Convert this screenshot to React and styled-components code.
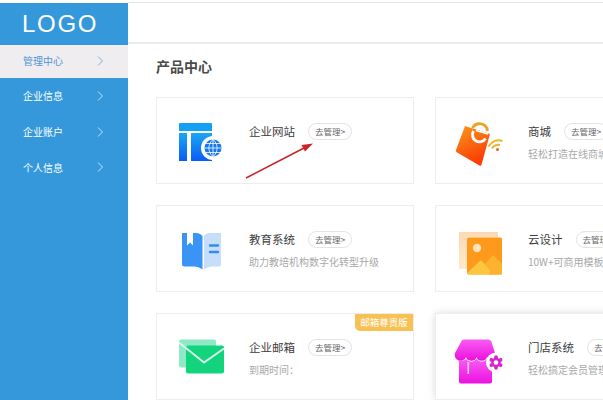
import React from "react";
import styled, { createGlobalStyle } from "styled-components";

const GlobalStyle = createGlobalStyle`
  html, body {
    margin: 0;
    padding: 0;
    background: #fff;
    font-family: "Noto Sans CJK SC", "Liberation Sans", sans-serif;
  }
  * {
    box-sizing: border-box;
  }
`;

const Page = styled.div`
  position: relative;
  display: flex;
  width: 603px;
  height: 400px;
  overflow: hidden;
  background: #fff;
`;

const Sidebar = styled.aside`
  flex: 0 0 128px;
  margin-top: 3px;
  background: #3498db;
`;

const Logo = styled.div`
  height: 41px;
  padding-left: 22px;
  font-family: "Liberation Sans", sans-serif;
  font-size: 24px;
  line-height: 41px;
  letter-spacing: 1.7px;
  color: #fff;
`;

const MenuList = styled.nav`
  display: flex;
  flex-direction: column;
  padding-top: 1px;
`;

const MenuItem = styled.div`
  display: flex;
  align-items: center;
  justify-content: space-between;
  height: ${(p) => (p.$active ? "33px" : "35.7px")};
  padding: 0 24px 2px 23px;
  margin-bottom: ${(p) => (p.$active ? "1px" : "0")};
  background: ${(p) => (p.$active ? "#efedf0" : "transparent")};
  color: ${(p) => (p.$active ? "#4f94d4" : "#fff")};
  font-size: 10px;
`;

const Main = styled.main`
  flex: 1;
  min-width: 0;
`;

const TopBar = styled.header`
  height: 42px;
  margin-top: 2px;
  border-top: 1px solid #e6e6e6;
  border-bottom: 2px solid #ececec;
`;

const Content = styled.div`
  padding: 12px 0 0 28px;
`;

const Heading = styled.h2`
  margin: 0 0 21px;
  font-size: 14px;
  line-height: 20px;
  font-weight: 700;
  color: #4a4a4a;
`;

const CardGrid = styled.div`
  display: grid;
  grid-template-columns: 258px 258px;
  grid-auto-rows: 87px;
  column-gap: 21px;
  row-gap: 21px;
`;

const Card = styled.article`
  position: relative;
  display: flex;
  align-items: center;
  height: 87px;
  padding-left: 16px;
  border: 1px solid #ededed;
  background: #fff;
  box-shadow: ${(p) => (p.$raised ? "0 0 8px rgba(0, 0, 0, 0.13)" : "none")};
`;

const IconBox = styled.div`
  flex: 0 0 60px;
  width: 60px;
  height: 60px;
  margin-right: 16px;
`;

const CardBody = styled.div`
  display: flex;
  flex-direction: column;
  gap: 7px;
  min-width: 0;
  padding-top: 2px;
`;

const TitleRow = styled.div`
  display: flex;
  align-items: center;
  white-space: nowrap;
`;

const Title = styled.h3`
  margin: 0 13px 0 0;
  font-size: 11.5px;
  line-height: 17px;
  font-weight: 400;
  color: #3c3c3c;
`;

const ManageButton = styled.span`
  flex: none;
  width: 44px;
  height: 17px;
  border: 1px solid #e3e3e3;
  border-radius: 9px;
  font-size: 8.5px;
  line-height: 15px;
  text-align: center;
  color: #666;
`;

const Subtitle = styled.p`
  margin: 0;
  height: 14px;
  font-size: 10px;
  line-height: 14px;
  color: #a8a8a8;
  white-space: nowrap;
`;

const Ribbon = styled.span`
  position: absolute;
  top: 0;
  right: 0;
  width: 58px;
  height: 17px;
  border-radius: 0 0 0 5px;
  background: #f8c153;
  color: #fff;
  font-size: 9.5px;
  line-height: 17px;
  text-align: center;
`;

const Annotation = styled.svg`
  position: absolute;
  left: 244px;
  top: 142px;
`;

const Chevron = ({ color }) => (
  <svg width="7" height="10" viewBox="0 0 7 10" fill="none">
    <path d="M1 .5 5.5 5 1 9.5" stroke={color} strokeWidth="0.9" />
  </svg>
);

const WebsiteIcon = () => (
  <svg width="60" height="60" viewBox="0 0 60 60">
    <defs>
      <linearGradient id="web" x1="0" y1="0" x2="0" y2="1">
        <stop offset="0" stopColor="#1ba7f2" />
        <stop offset="1" stopColor="#0a5cf5" />
      </linearGradient>
    </defs>
    <path d="M6 13a1 1 0 0 1 1-1h31a1 1 0 0 1 1 1v7H6z" fill="#14a0f4" />
    <path d="M6 22h8v28H6zM18 22h21v28H18z" fill="url(#web)" />
    <circle cx="40" cy="37" r="12" fill="#fff" />
    <circle cx="40" cy="37" r="8.500" fill="#1778ea" />
    <path
      d="M31.500 37h17M33 32.500h14M33 41.500h14M40 28.500v17M40 28.500c-5.500 4.500-5.500 12.500 0 17M40 28.500c5.500 4.500 5.500 12.500 0 17"
      stroke="#fff"
      strokeWidth="0.8"
      fill="none"
    />
  </svg>
);

const ShopIcon = () => (
  <svg width="60" height="60" viewBox="0 0 60 60">
    <defs>
      <linearGradient id="shop" x1="0" y1="0" x2="0.4" y2="1">
        <stop offset="0" stopColor="#f99a1d" />
        <stop offset="1" stopColor="#fb3c04" />
      </linearGradient>
    </defs>
    <path
      d="M13 15 38 23 29.500 53.500a1.500 1.500 0 0 1-2 1L5 41.500a2.500 2.500 0 0 1-1-2.500z"
      fill="url(#shop)"
    />
    <path d="M21.500 20a7 7 0 0 0 12 7.500" fill="none" stroke="#fff" strokeWidth="2.800" />
    <path d="M20.500 17a8 8 0 0 1 15 3" fill="none" stroke="#eda32a" strokeWidth="2.800" />
    <path d="M24 19.500 36 23" stroke="#fff" strokeWidth="1.500" />
    <path d="M36.500 35.500c3-5.500 9-7.500 14-5.500" fill="none" stroke="#eeb52f" strokeWidth="2" />
    <path d="M40 37.500c2-3 5-4 8-3.500" fill="none" stroke="#eeb52f" strokeWidth="2" />
    <circle cx="45.500" cy="38.500" r="1.500" fill="#e8622a" />
  </svg>
);

const BookIcon = () => (
  <svg width="60" height="60" viewBox="0 0 60 60">
    <path
      d="M9 14h5v12.500l3-3 3 3V14h3c3 0 5.500 1.500 6.500 3v33.500c-3-2.500-7-3-11-3h-7A2.500 2.500 0 0 1 9 45z"
      fill="#3a94f5"
    />
    <path d="M31 17c1-1.700 3.500-3 6-3h11v31.500a2 2 0 0 1-2 2h-4c-4 0-8 .5-11 3z" fill="#c6def9" />
    <path d="M37 26.500h8M37 33h8" stroke="#2f8df2" strokeWidth="2.400" strokeLinecap="round" />
  </svg>
);

const ImageIcon = () => (
  <svg width="60" height="60" viewBox="0 0 60 60">
    <defs>
      <linearGradient id="imgback" x1="0" y1="0" x2="0" y2="1">
        <stop offset="0" stopColor="#fcd9b3" />
        <stop offset="1" stopColor="#fdebc9" />
      </linearGradient>
    </defs>
    <path d="M7 13h39v5.500H15V50H7z" fill="url(#imgback)" />
    <rect x="15" y="18.500" width="35" height="37" rx="1.500" fill="#fd9a1c" />
    <circle cx="25" cy="29" r="4.200" fill="#ffe2bb" />
    <path d="M15 54 29 41l10 11-2 3.500H16.500z" fill="#fdc63f" />
    <path d="M33 45l8-9 9 9v9a1.500 1.500 0 0 1-1.500 1.500H37l2-3.500z" fill="#fdb32f" />
  </svg>
);

const MailIcon = () => (
  <svg width="60" height="60" viewBox="0 0 60 60">
    <rect x="6" y="12.500" width="37" height="28" rx="2" fill="#8eeac6" />
    <rect x="13" y="18.500" width="38" height="28" rx="2" fill="#12d47c" />
    <path d="M6 15.500 31 35.500 51 21.500" fill="none" stroke="#d9f7ea" strokeWidth="2" />
  </svg>
);

const gearTeeth = [0, 60, 120, 180, 240, 300];

const StoreIcon = () => (
  <svg width="60" height="60" viewBox="0 0 60 60">
    <defs>
      <linearGradient id="store" x1="0" y1="0" x2="0" y2="1">
        <stop offset="0" stopColor="#f85cf2" />
        <stop offset="1" stopColor="#ec0fe0" />
      </linearGradient>
    </defs>
    <path
      d="M12 12.500h24c2 0 3 1 3.500 2.500L43 26a5 5 0 0 1-8 4 5.500 5.500 0 0 1-10.500 0 5.500 5.500 0 0 1-10.500 0A5.500 5.500 0 0 1 3 26l6-11c.6-1.500 1.500-2.500 3-2.500z"
      fill="url(#store)"
    />
    <path
      d="M7 33a6 6 0 0 0 7-1 6.500 6.500 0 0 0 10.500 0 6.500 6.500 0 0 0 10.500 0 6 6 0 0 0 5 1.500v21a2 2 0 0 1-2 2H9a2 2 0 0 1-2-2z"
      fill="url(#store)"
    />
    <rect x="15.500" y="35" width="1.600" height="12" fill="#fbd0f8" />
    <circle cx="44" cy="35.500" r="10" fill="#fff" />
    <circle cx="44" cy="35.500" r="4.800" fill="#d526cf" />
    {gearTeeth.map((deg) => (
      <circle key={deg} cx="44" cy="30.200" r="1.900" fill="#d526cf" transform={`rotate(${deg} 44 35.500)`} />
    ))}
    <circle cx="44" cy="35.500" r="2.300" fill="#fff" />
  </svg>
);

const menu = ["管理中心", "企业信息", "企业账户", "个人信息"];

const products = [
  { title: "企业网站", icon: <WebsiteIcon /> },
  { title: "商城", sub: "轻松打造在线商城系统", icon: <ShopIcon /> },
  { title: "教育系统", sub: "助力教培机构数字化转型升级", icon: <BookIcon /> },
  { title: "云设计", sub: "10W+可商用模板", icon: <ImageIcon /> },
  { title: "企业邮箱", sub: "到期时间：", icon: <MailIcon />, ribbon: "邮箱尊贵版" },
  { title: "门店系统", sub: "轻松搞定会员管理", icon: <StoreIcon />, raised: true },
];

export default function App() {
  return (
    <Page>
      <GlobalStyle />
      <Sidebar>
        <Logo>LOGO</Logo>
        <MenuList>
          {menu.map((label, i) => (
            <MenuItem key={label} $active={i === 0}>
              {label}
              <Chevron color={i === 0 ? "#7da7cf" : "#d5e9f8"} />
            </MenuItem>
          ))}
        </MenuList>
      </Sidebar>
      <Main>
        <TopBar />
        <Content>
          <Heading>产品中心</Heading>
          <CardGrid>
            {products.map((p) => (
              <Card key={p.title} $raised={p.raised}>
                <IconBox>{p.icon}</IconBox>
                <CardBody>
                  <TitleRow>
                    <Title>{p.title}</Title>
                    <ManageButton>去管理&gt;</ManageButton>
                  </TitleRow>
                  <Subtitle>{p.sub}</Subtitle>
                </CardBody>
                {p.ribbon && <Ribbon>{p.ribbon}</Ribbon>}
              </Card>
            ))}
          </CardGrid>
        </Content>
      </Main>
      <Annotation width="72" height="40" viewBox="0 0 72 40">
        <path d="M2 36 60 6" stroke="#c9252b" strokeWidth="1.500" />
        <path d="M69 1.500 57.500 3l3.500 6.500z" fill="#c9252b" />
      </Annotation>
    </Page>
  );
}
